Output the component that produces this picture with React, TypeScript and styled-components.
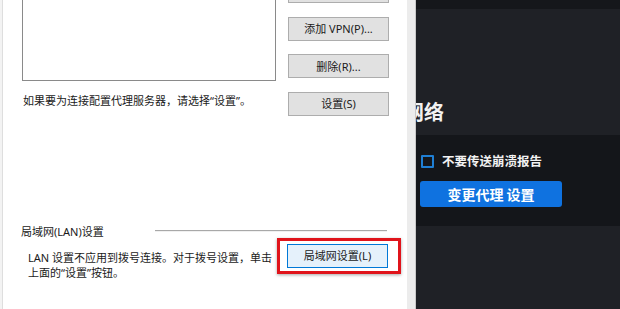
import React from "react";
import styled, { createGlobalStyle } from "styled-components";

const GlobalStyle = createGlobalStyle`
  html, body {
    margin: 0;
    padding: 0;
    overflow: hidden;
  }
  body {
    font-family: "Noto Sans CJK SC", "Noto Sans", sans-serif;
  }
`;

const Screen = styled.div`
  width: 620px;
  height: 309px;
  display: flex;
  overflow: hidden;
  background: #1d1f24;
`;

/* ---------- Windows dialog ---------- */

const Dialog = styled.div`
  width: 385px;
  flex: none;
  display: flex;
  flex-direction: column;
  background: #ffffff;
  border-left: 2px solid #f3f3f3;
  box-shadow: inset 1px 0 0 #dedede;
  padding-left: 20px;
  box-sizing: content-box;
  color: #1a1a1a;
  font-family: "Noto Sans", "Noto Sans CJK SC", sans-serif;
  font-size: 11px;
  line-height: 15px;
`;

const DialogEdge = styled.div`
  width: 8px;
  flex: none;
  background: #ececec;
  border-right: 1px solid #c9c9c9;
`;

const TopArea = styled.div`
  display: flex;
  gap: 12px;
  margin-top: -21px;
`;

const ListColumn = styled.div`
  width: 254px;
  display: flex;
  flex-direction: column;
`;

const ListBox = styled.div`
  height: 100px;
  border: 1px solid #8a8a8a;
  border-top-color: #a0a0a0;
  background: #ffffff;
`;

const Hint = styled.p`
  margin: 12px 0 0 1px;
  line-height: 15px;
  white-space: nowrap;
`;

const ButtonColumn = styled.div`
  display: flex;
  flex-direction: column;
  gap: 13.5px;
`;

const WinButton = styled.div<{ $focused?: boolean }>`
  width: 101px;
  height: 24px;
  box-sizing: border-box;
  display: flex;
  align-items: center;
  justify-content: center;
  background: ${(p) => (p.$focused ? "#e5f1fb" : "#e1e1e1")};
  border: 1px solid ${(p) => (p.$focused ? "#0078d7" : "#adadad")};
  font-size: 11px;
  white-space: nowrap;
`;

const LanGroup = styled.div`
  margin-top: 108px;
  display: flex;
  flex-direction: column;
`;

const GroupHeader = styled.div`
  display: flex;
  align-items: center;
  height: 15px;
`;

const GroupTitle = styled.span`
  margin-left: -1px;
  white-space: nowrap;
`;

const GroupLine = styled.div`
  width: 232px;
  margin-left: auto;
  margin-right: 20px;
  margin-top: -1px;
  height: 1px;
  background: #a8a8a8;
  box-shadow: 0 1px 0 #f0f0f0;
`;

const LanRow = styled.div`
  display: flex;
  align-items: flex-start;
  margin-top: -1px;
`;

const LanText = styled.p`
  margin: 12px 0 0 6px;
  width: 244px;
  line-height: 15px;
  white-space: nowrap;
`;

const Highlight = styled.div`
  margin-left: 5px;
  padding: 3px 10px 3px 7px;
  border: 3px solid #e0141b;
  box-shadow: 0 1px 3px rgba(0, 0, 0, 0.35);
`;

/* ---------- dark app behind ---------- */

const AppPanel = styled.div`
  flex: 1;
  display: flex;
  flex-direction: column;
  overflow: hidden;
  background: #1f2126;
  color: #f2f2f2;
`;

const TitleBar = styled.div`
  height: 9px;
  flex: none;
  background: #15171b;
`;

const HeadingArea = styled.div`
  height: 126px;
  flex: none;
  display: flex;
  align-items: flex-end;
  padding-bottom: 10px;
  box-sizing: border-box;
`;

const Heading = styled.h2`
  margin: 0 0 0 -12px;
  font-size: 20px;
  line-height: 26px;
  font-weight: 700;
  white-space: nowrap;
`;

const Section = styled.div`
  height: 91px;
  flex: none;
  background: #14161a;
  display: flex;
  flex-direction: column;
  padding: 19px 0 0 4px;
  box-sizing: border-box;
  gap: 13px;
`;

const CheckRow = styled.label`
  display: flex;
  align-items: center;
  gap: 8px;
  padding-left: 1px;
  font-size: 12.5px;
  font-weight: 700;
  line-height: 14px;
  white-space: nowrap;
`;

const CheckBox = styled.span`
  width: 13px;
  height: 13px;
  box-sizing: border-box;
  border: 2px solid #1f7fd4;
  border-radius: 1px;
`;

const PrimaryButton = styled.div`
  width: 142px;
  height: 26px;
  display: flex;
  align-items: center;
  justify-content: center;
  background: #0f72e0;
  border-radius: 3px;
  color: #ffffff;
  font-size: 14px;
  font-weight: 700;
  white-space: nowrap;
`;

const App = () => {
  return (
    <>
      <GlobalStyle />
      <Screen>
        <Dialog>
          <TopArea>
            <ListColumn>
              <ListBox />
              <Hint>如果要为连接配置代理服务器，请选择“设置”。</Hint>
            </ListColumn>
            <ButtonColumn>
              <WinButton />
              <WinButton>添加 VPN(P)...</WinButton>
              <WinButton>删除(R)...</WinButton>
              <WinButton>设置(S)</WinButton>
            </ButtonColumn>
          </TopArea>
          <LanGroup>
            <GroupHeader>
              <GroupTitle>局域网(LAN)设置</GroupTitle>
              <GroupLine />
            </GroupHeader>
            <LanRow>
              <LanText>
                LAN 设置不应用到拨号连接。对于拨号设置，单击
                <br />
                上面的“设置”按钮。
              </LanText>
              <Highlight>
                <WinButton $focused>局域网设置(L)</WinButton>
              </Highlight>
            </LanRow>
          </LanGroup>
        </Dialog>
        <DialogEdge />
        <AppPanel>
          <TitleBar />
          <HeadingArea>
            <Heading>网络</Heading>
          </HeadingArea>
          <Section>
            <CheckRow>
              <CheckBox />
              不要传送崩溃报告
            </CheckRow>
            <PrimaryButton>变更代理 设置</PrimaryButton>
          </Section>
        </AppPanel>
      </Screen>
    </>
  );
};

export default App;
